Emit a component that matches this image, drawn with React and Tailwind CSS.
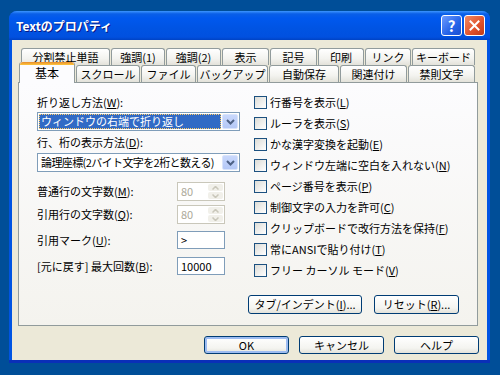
import React from 'react';

function K({ text, k, after = '' }) {
  return (
    <span>
      {text}(<u>{k}</u>){after}
    </span>
  );
}

function Tab({ label, w, active }) {
  if (active) {
    return (
      <div
        style={{ width: w }}
        className="relative top-[1px] z-10 mr-px h-[21px] shrink-0 rounded-t-[3px] border border-b-0 border-[#919b9c] border-t-0 bg-[#fcfcfe] text-center text-[12px]"
      >
        <div className="h-[3px] rounded-t-[3px] bg-[linear-gradient(to_bottom,#e68b2c,#ffc73c)]" />
        <div className="leading-[16px]">{label}</div>
      </div>
    );
  }
  return (
    <div
      style={{ width: w }}
      className="mr-px h-[17px] shrink-0 whitespace-nowrap rounded-t-[3px] border border-b-0 border-[#919b9c] bg-[linear-gradient(to_bottom,#ffffff,#f3f3ef_60%,#e3e2da)] text-center leading-[16px]"
    >
      {label}
    </div>
  );
}

function Chevron() {
  return (
    <svg width="9" height="6" viewBox="0 0 9 6">
      <path d="M1 1 L4.5 4.5 L8 1" fill="none" stroke="#4d6185" strokeWidth="2" />
    </svg>
  );
}

function Combo({ children, focused }) {
  return (
    <div className="flex h-[19px] w-[203px] items-stretch border border-[#7f9db9] bg-white p-px">
      <div className="flex flex-1 items-center overflow-hidden whitespace-nowrap">
        {focused ? (
          <div className="flex h-full w-full items-center border border-dotted border-[#ffcc66] bg-[#316ac5] pl-px text-white">
            {children}
          </div>
        ) : (
          <div className="pl-[2px]">{children}</div>
        )}
      </div>
      <div className="ml-px flex w-[16px] items-center justify-center rounded-[2px] border border-[#d9e4fb] bg-[linear-gradient(to_bottom,#c9d8fc,#b4c8f6)]">
        <Chevron />
      </div>
    </div>
  );
}

function Spin({ value }) {
  return (
    <div className="flex h-[19px] w-[48px] items-stretch border border-[#c9c7ba] bg-white p-px">
      <div className="flex-1 pl-[2px] leading-[15px] text-[#aca899]">{value}</div>
      <div className="flex w-[15px] flex-col gap-px">
        <div className="flex flex-1 items-center justify-center rounded-[2px] bg-[#f1f0ea]">
          <svg width="7" height="4" viewBox="0 0 7 4"><path d="M0.5 3.5 L3.5 0.5 L6.5 3.5" fill="none" stroke="#c9c7ba" strokeWidth="1.5" /></svg>
        </div>
        <div className="flex flex-1 items-center justify-center rounded-[2px] bg-[#f1f0ea]">
          <svg width="7" height="4" viewBox="0 0 7 4"><path d="M0.5 0.5 L3.5 3.5 L6.5 0.5" fill="none" stroke="#c9c7ba" strokeWidth="1.5" /></svg>
        </div>
      </div>
    </div>
  );
}

function Field({ value }) {
  return (
    <div className="h-[18px] w-[48px] border border-[#7f9db9] bg-white pl-[3px] leading-[16px]">
      {value}
    </div>
  );
}

function Check({ children }) {
  return (
    <div className="flex h-[21px] items-center gap-[3px]">
      <div className="h-[13px] w-[13px] border border-[#1c5180] bg-[linear-gradient(135deg,#dcdcd7,#ffffff)]" />
      <span className="whitespace-nowrap">{children}</span>
    </div>
  );
}

function Btn({ children, w, def, h = 'h-[18px]' }) {
  return (
    <div
      style={{ width: w }}
      className={`${h} flex items-center justify-center whitespace-nowrap rounded-[3px] border border-[#003c74] bg-[linear-gradient(to_bottom,#ffffff,#f4f4f0_70%,#e3e2da)] ${def ? 'shadow-[inset_0_0_0_2px_#9dbcf1]' : ''}`}
    >
      {children}
    </div>
  );
}

export default function App() {
  const row1 = [
    ['分割禁止単語', 89], ['強調(1)', 54], ['強調(2)', 55], ['表示', 47],
    ['記号', 47], ['印刷', 46], ['リンク', 46], ['キーボード', 63],
  ];
  const row2 = [
    ['スクロール', 64], ['ファイル', 55], ['バックアップ', 71],
    ['自動保存', 70], ['関連付け', 67], ['禁則文字', 67],
  ];

  return (
    <div className="h-[375px] w-[500px] bg-[#004e98] pl-[9px] pt-[11px] font-['Noto_Sans_CJK_JP',sans-serif] text-[11px] text-black">
      <div className="flex h-[352px] w-[481px] flex-col overflow-hidden rounded-t-[8px] bg-[#0054e3]">
        {/* title bar */}
        <div className="flex h-[29px] items-center bg-[linear-gradient(to_bottom,#3d95ff_0%,#0a5fe8_10%,#0058ee_25%,#0054e3_60%,#0150df_90%,#0043c4_100%)] pl-[7px] pr-[5px]">
          <span className="flex-1 text-[12px] font-bold text-white [text-shadow:1px_1px_#0a1883]">Textのプロパティ</span>
          <div className="flex gap-[2px]">
            <div className="flex h-[21px] w-[21px] items-center justify-center rounded-[3px] border border-white bg-[linear-gradient(135deg,#6d9cff,#2663e8_60%,#1a4fd0)] text-[15px] font-bold leading-none text-white">?</div>
            <div className="flex h-[21px] w-[21px] items-center justify-center rounded-[3px] border border-white bg-[linear-gradient(135deg,#f08a63,#e0502b_60%,#c23a18)]">
              <svg width="11" height="11" viewBox="0 0 11 11"><path d="M1.5 1.5 L9.5 9.5 M9.5 1.5 L1.5 9.5" stroke="#fff" strokeWidth="2" strokeLinecap="square" /></svg>
            </div>
          </div>
        </div>

        {/* client */}
        <div className="mx-[3px] flex h-[320px] flex-col bg-[#ece9d8] px-[6px] pt-[8px]">
          <div className="flex h-[16px] pl-[3px]">
            {row1.map(([l, w]) => <Tab key={l} label={l} w={w} />)}
          </div>
          <div className="flex h-[18px] items-end pl-[1px]">
            <Tab label="基本" w={56} active />
            {row2.map(([l, w]) => <Tab key={l} label={l} w={w} />)}
          </div>

          {/* panel */}
          <div className="flex h-[244px] w-[460px] flex-col border border-[#919b9c] bg-[linear-gradient(to_bottom,#fcfcfe,#f4f3ee)] pb-[11px] pt-[9px]">
            <div className="flex">
              <div className="ml-[18px] flex w-[203px] flex-col pt-[3px]">
                <div className="h-[14px] leading-[14px]"><K text="折り返し方法" k="W" after=":" /></div>
                <div className="mt-[3px]"><Combo focused>ウィンドウの右端で折り返し</Combo></div>
                <div className="mt-[4px] h-[14px] leading-[14px]"><K text="行、桁の表示方法" k="D" after=":" /></div>
                <div className="mt-[4px]"><Combo><span className="tracking-[-0.6px]">論理座標(2バイト文字を2桁と数える)</span></Combo></div>
                <div className="mt-[10px] flex w-[188px] items-center justify-between">
                  <K text="普通行の文字数" k="M" after=":" /><Spin value="80" />
                </div>
                <div className="mt-[4px] flex w-[188px] items-center justify-between">
                  <K text="引用行の文字数" k="Q" after=":" /><Spin value="80" />
                </div>
                <div className="mt-[7px] flex w-[188px] items-center justify-between">
                  <K text="引用マーク" k="U" after=":" /><Field value=">" />
                </div>
                <div className="mt-[8px] flex w-[188px] items-center justify-between">
                  <K text="[元に戻す] 最大回数" k="B" after=":" /><Field value="10000" />
                </div>
              </div>
              <div className="ml-[14px] flex flex-col">
                <Check><K text="行番号を表示" k="L" /></Check>
                <Check><K text="ルーラを表示" k="S" /></Check>
                <Check><K text="かな漢字変換を起動" k="E" /></Check>
                <Check><K text="ウィンドウ左端に空白を入れない" k="N" /></Check>
                <Check><K text="ページ番号を表示" k="P" /></Check>
                <Check><K text="制御文字の入力を許可" k="C" /></Check>
                <Check><K text="クリップボードで改行方法を保持" k="F" /></Check>
                <Check><K text="常にANSIで貼り付け" k="T" /></Check>
                <Check><K text="フリー カーソル モード" k="V" /></Check>
              </div>
            </div>
            <div className="mt-auto flex justify-end gap-[12px] pr-[18px]">
              <Btn w={114} h="h-[19px]"><span>タブ/インデント(<u>I</u>)...</span></Btn>
              <Btn w={85} h="h-[19px]"><span>リセット(<u>R</u>)...</span></Btn>
            </div>
          </div>

          <div className="mt-[10px] flex justify-end gap-[10px] pr-[2px]">
            <Btn w={85} def>OK</Btn>
            <Btn w={85}>キャンセル</Btn>
            <Btn w={85}>ヘルプ</Btn>
          </div>
        </div>
        <div className="h-[3px] bg-[#0a2fb8]" />
      </div>
    </div>
  );
}
